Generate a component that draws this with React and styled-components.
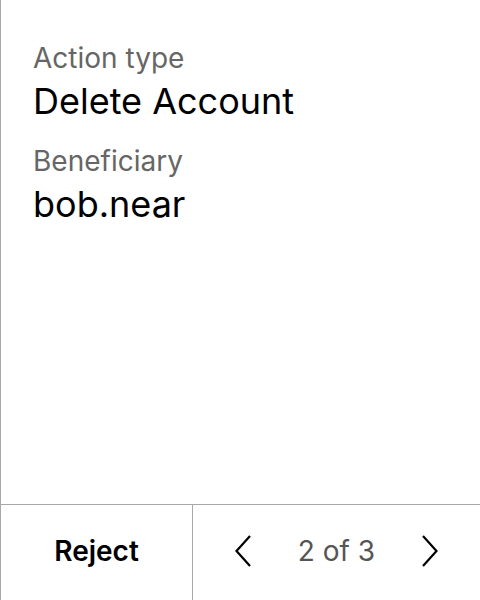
import React from 'react'
import styled, { createGlobalStyle } from 'styled-components'

const GlobalStyle = createGlobalStyle`
  html, body, #root {
    margin: 0;
    height: 100%;
  }
  body {
    font-family: Inter, "Noto Sans", sans-serif;
    background: #fff;
    color: #000;
  }
`

const Screen = styled.div`
  display: flex;
  flex-direction: column;
  height: 100%;
  box-sizing: border-box;
  border-left: 1px solid #a8a8a8;
`

const Details = styled.div`
  flex: 1;
  display: flex;
  flex-direction: column;
  padding: 40px 32px 0;
`

const Field = styled.div`
  display: flex;
  flex-direction: column;
  margin-bottom: 17px;
`

const Label = styled.div`
  font-size: 28px;
  line-height: 36px;
  color: #666;
`

const Value = styled.div`
  font-size: 36px;
  line-height: 50px;
  color: #000;
`

const Footer = styled.div`
  display: flex;
  height: 96px;
  box-sizing: border-box;
  border-top: 1px solid #a8a8a8;
`

const RejectButton = styled.button`
  width: 192px;
  flex-shrink: 0;
  border: 0;
  border-right: 1px solid #a8a8a8;
  background: none;
  font-family: inherit;
  font-size: 28px;
  font-weight: 600;
  color: #000;
  padding: 0 0 4px;
`

const Pager = styled.div`
  flex: 1;
  display: flex;
  align-items: center;
  justify-content: space-between;
  padding: 0 42px 3px;
`

const PageText = styled.span`
  font-size: 28px;
  color: #555;
`

const Arrow = styled.button`
  display: flex;
  border: 0;
  background: none;
  padding: 0;
`

const Chevron = ({ dir }) => (
  <svg width="16" height="32" viewBox="0 0 16 32" fill="none" stroke="#000" strokeWidth="2.2">
    {dir === 'left'
      ? <polyline points="15,1 1.5,16 15,31" />
      : <polyline points="1,1 14.5,16 1,31" />}
  </svg>
)

const fields = [
  { label: 'Action type', value: 'Delete Account' },
  { label: 'Beneficiary', value: 'bob.near' },
]

export default function App() {
  return (
    <>
      <GlobalStyle />
      <Screen>
        <Details>
          {fields.map(f => (
            <Field key={f.label}>
              <Label>{f.label}</Label>
              <Value>{f.value}</Value>
            </Field>
          ))}
        </Details>
        <Footer>
          <RejectButton>Reject</RejectButton>
          <Pager>
            <Arrow><Chevron dir="left" /></Arrow>
            <PageText>2 of 3</PageText>
            <Arrow><Chevron dir="right" /></Arrow>
          </Pager>
        </Footer>
      </Screen>
    </>
  )
}
